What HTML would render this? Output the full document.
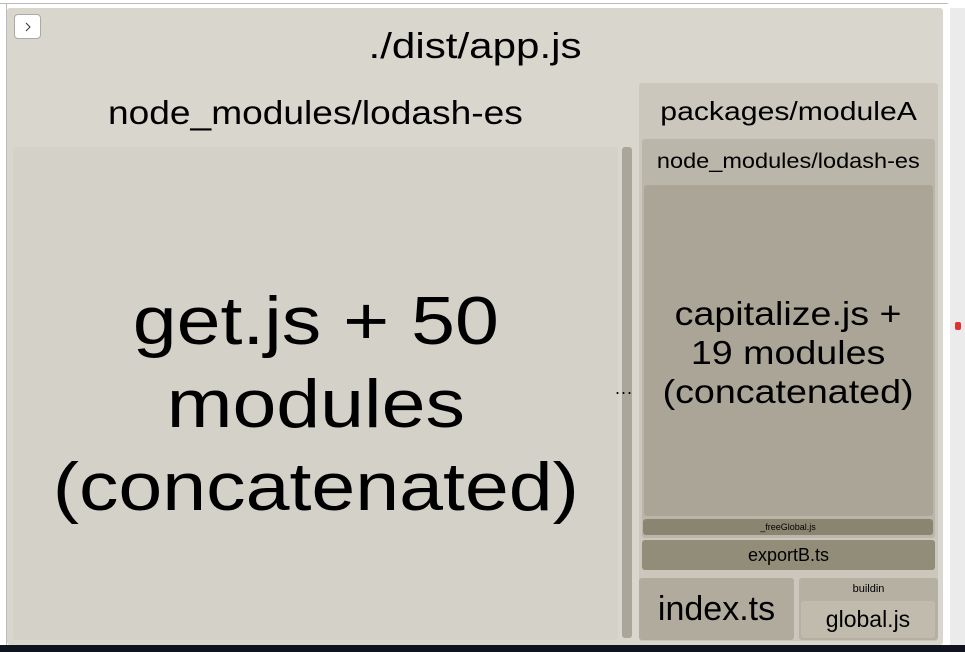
<!DOCTYPE html><html><head><style>
body{margin:0;width:965px;height:652px;background:#fff;position:relative;overflow:hidden;font-family:"Liberation Sans",sans-serif;color:#000}
div{position:absolute;box-sizing:border-box}
.c{display:flex;align-items:center;justify-content:center;text-align:center;border-radius:3px}
span.s{display:inline-block;white-space:nowrap}
</style></head><body>
<div style="left:0;top:3px;width:948px;height:1px;background:#bbb"></div>
<div style="left:6px;top:3px;width:1px;height:642px;background:#bbb"></div>
<div style="left:7px;top:8px;width:936px;height:637px;background:#d9d6ce;border-radius:3px"></div>
<div style="left:950px;top:8px;width:15px;height:637px;background:#ebebeb"></div>
<div style="left:0;top:645px;width:965px;height:7px;background:#10141f"></div>
<div class="c" style="left:14px;top:14px;width:27px;height:25px;background:#fff;border:1px solid #aaa;border-radius:4px;font-size:13px"><svg width="8" height="10" viewBox="0 0 8 10"><path d="M2 1 L6 5 L2 9" fill="none" stroke="#333" stroke-width="1"/></svg></div>
<div style="left:7px;top:25px;width:936px;text-align:center;font-size:36px"><span class="s" style="transform:scaleX(1.17)">./dist/app.js</span></div>
<div style="left:13px;top:94px;width:605px;text-align:center;font-size:33px"><span class="s" style="transform:scaleX(1.125)">node_modules/lodash-es</span></div>
<div class="c" style="left:13px;top:147px;width:605px;height:493px;background:#d4d1c9;font-size:68px;line-height:83px;padding-top:22px"><span class="s" style="transform:scaleX(1.16)">get.js + 50<br>modules<br>(concatenated)</span></div>
<div style="left:622px;top:147px;width:10px;height:491px;background:#aba69a;border-radius:3px"></div>
<div style="left:615px;top:378px;font-size:18px;z-index:2;letter-spacing:1px">...</div>
<div style="left:639px;top:83px;width:299px;height:558px;background:#cbc7bd;border-radius:3px"></div>
<div style="left:639px;top:96px;width:299px;text-align:center;font-size:26px"><span class="s" style="transform:scaleX(1.16)">packages/moduleA</span></div>
<div style="left:642px;top:139px;width:293px;height:399px;background:#bbb6aa;border-radius:3px"></div>
<div style="left:642px;top:150px;width:293px;text-align:center;font-size:21px"><span class="s" style="transform:scaleX(1.12)">node_modules/lodash-es</span></div>
<div class="c" style="left:644px;top:185px;width:289px;height:331px;background:#aaa597;font-size:33px;line-height:39px;padding-top:4px"><span class="s" style="transform:scaleX(1.14)">capitalize.js +<br>19 modules<br>(concatenated)</span></div>
<div class="c" style="left:643px;top:519px;width:290px;height:16px;background:#8a8570;font-size:9px">_freeGlobal.js</div>
<div class="c" style="left:642px;top:540px;width:293px;height:30px;background:#928d78;font-size:18px">exportB.ts</div>
<div class="c" style="left:639px;top:578px;width:155px;height:62px;background:#b0ab9d;font-size:34px">index.ts</div>
<div style="left:799px;top:578px;width:139px;height:62px;background:#b5b0a2;border-radius:3px"></div>
<div style="left:799px;top:583px;width:139px;text-align:center;font-size:11px">buildin</div>
<div class="c" style="left:801px;top:601px;width:134px;height:37px;background:#c0bbad;font-size:23px">global.js</div>
<div style="left:955px;top:322px;width:6px;height:8px;background:#e03030;border-radius:2px"></div>
</body></html>
